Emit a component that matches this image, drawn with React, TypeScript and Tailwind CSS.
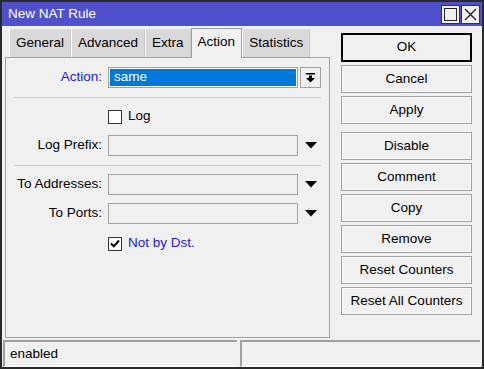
import React from 'react';

const font = { fontFamily: '"Liberation Sans", Arial, sans-serif' };

const tabs = ['General', 'Advanced', 'Extra', 'Action', 'Statistics'];

const SelectArrow = () => (
  <svg width="9" height="10" viewBox="0 0 9 10">
    <rect x="0" y="0" width="9" height="1.5" fill="#000" />
    <rect x="3" y="2.5" width="3" height="3" fill="#000" />
    <polygon points="0,5 9,5 4.5,9.5" fill="#000" />
  </svg>
);

const Triangle = () => (
  <svg width="12" height="7" viewBox="0 0 12 7">
    <polygon points="0,0 12,0 6,6.5" fill="#000" />
  </svg>
);

const Checkbox = ({ checked }: { checked?: boolean }) => (
  <div className="w-[14px] h-[14px] border border-[#333] bg-white flex items-center justify-center">
    {checked && (
      <svg width="10" height="9" viewBox="0 0 10 9">
        <path d="M1 4.5 L3.8 7.3 L9 1.5" stroke="#000" strokeWidth="2" fill="none" />
      </svg>
    )}
  </div>
);

const FieldRow = ({ label, blue }: { label: string; blue?: boolean }) => (
  <div className="flex items-center h-[21px]">
    <div className={`w-[98px] text-right pr-[2px] ${blue ? 'text-[#1a1ae6]' : 'text-black'}`}>{label}</div>
    <div className="ml-[4px] w-[190px] h-[21px] border border-[#a0a0a0] bg-[#f0f0f0]" />
    <div className="ml-[7px] w-[12px] flex items-center justify-center">
      <Triangle />
    </div>
  </div>
);

const Btn = ({ label }: { label: string }) => (
  <div className="h-[28px] flex items-center justify-center bg-[#f0f0f0] border border-[#a0a0a0] shadow-[inset_0_0_0_1px_#fafafa]">
    {label}
  </div>
);

export default function App() {
  return (
    <div className="w-[484px] h-[369px] border-2 border-[#2a2a2a] bg-[#f0f0f0] flex flex-col text-[13.5px] text-black" style={font}>
      {/* Title bar */}
      <div className="h-[24px] bg-[#5050cc] flex items-center pl-[6px] pr-[2px]">
        <span className="text-white flex-1">New NAT Rule</span>
        <div className="flex gap-[1px]">
          <div className="w-[19px] h-[19px] bg-[#f0f0f0] border border-[#333] flex items-center justify-center">
            <div className="w-[13px] h-[13px] border border-[#222]" />
          </div>
          <div className="w-[19px] h-[19px] bg-[#f0f0f0] border border-[#333] flex items-center justify-center">
            <svg width="13" height="13" viewBox="0 0 13 13">
              <path d="M1 1 L12 12 M12 1 L1 12" stroke="#222" strokeWidth="1.4" />
            </svg>
          </div>
        </div>
      </div>

      {/* Body */}
      <div className="h-[314px] flex">
        <div className="ml-[3px] w-[325px] flex flex-col">
          <div className="h-[31px] flex items-end pl-[4px]">
            {tabs.map((t) =>
              t === 'Action' ? (
                <div
                  key={t}
                  className="relative z-10 h-[30px] -mb-[1px] px-[6px] bg-[#f0f0f0] border border-b-0 border-[#a0a0a0] flex items-center pb-[3px]"
                >
                  {t}
                </div>
              ) : (
                <div
                  key={t}
                  className="h-[28px] px-[6px] bg-[#d9d9d9] border-l border-white border-r border-r-[#c8c8c8] flex items-center"
                >
                  {t}
                </div>
              )
            )}
          </div>
          <div className="h-[281px] border border-[#a0a0a0] flex flex-col pt-[9px]">
            <div className="flex items-center h-[21px]">
              <div className="w-[98px] text-right pr-[2px] text-[#1a1ae6]">Action:</div>
              <div className="ml-[4px] w-[190px] h-[21px] border border-[#a0a0a0] p-[1px] bg-white">
                <div className="h-full bg-[#0078d7] text-white flex items-center pl-[4px]">same</div>
              </div>
              <div className="ml-[2px] w-[21px] h-[21px] border border-[#a0a0a0] flex items-center justify-center">
                <SelectArrow />
              </div>
            </div>
            <div className="mt-[9px] mx-[8px] h-[1px] bg-[#c8c8c8]" />
            <div className="mt-[11px] flex items-center h-[15px]">
              <div className="ml-[102px]">
                <Checkbox />
              </div>
              <span className="ml-[6px]">Log</span>
            </div>
            <div className="mt-[11px]">
              <FieldRow label="Log Prefix:" />
            </div>
            <div className="mt-[9px] mx-[8px] h-[1px] bg-[#c8c8c8]" />
            <div className="mt-[8px]">
              <FieldRow label="To Addresses:" />
            </div>
            <div className="mt-[8px]">
              <FieldRow label="To Ports:" />
            </div>
            <div className="mt-[12px] flex items-center h-[15px]">
              <div className="ml-[102px]">
                <Checkbox checked />
              </div>
              <span className="ml-[6px] text-[#1a1ae6]">Not by Dst.</span>
            </div>
          </div>
        </div>

        <div className="ml-[11px] w-[131px] pt-[7px] flex flex-col">
          <div className="flex flex-col gap-[3px]">
            <div className="h-[29px] border-2 border-black flex items-center justify-center">OK</div>
            <Btn label="Cancel" />
            <Btn label="Apply" />
          </div>
          <div className="mt-[8px] flex flex-col gap-[3px]">
            <Btn label="Disable" />
            <Btn label="Comment" />
            <Btn label="Copy" />
            <Btn label="Remove" />
            <Btn label="Reset Counters" />
            <Btn label="Reset All Counters" />
          </div>
        </div>
      </div>

      {/* Status bar */}
      <div className="h-[27px] flex gap-[3px] pl-[1px] pr-[2px]">
        <div className="w-[234px] border-t-2 border-l-2 border-[#a0a0a0] border-b border-b-white flex items-center pl-[5px]">enabled</div>
        <div className="flex-1 border-t-2 border-l-2 border-[#a0a0a0] border-b border-b-white" />
      </div>
    </div>
  );
}
